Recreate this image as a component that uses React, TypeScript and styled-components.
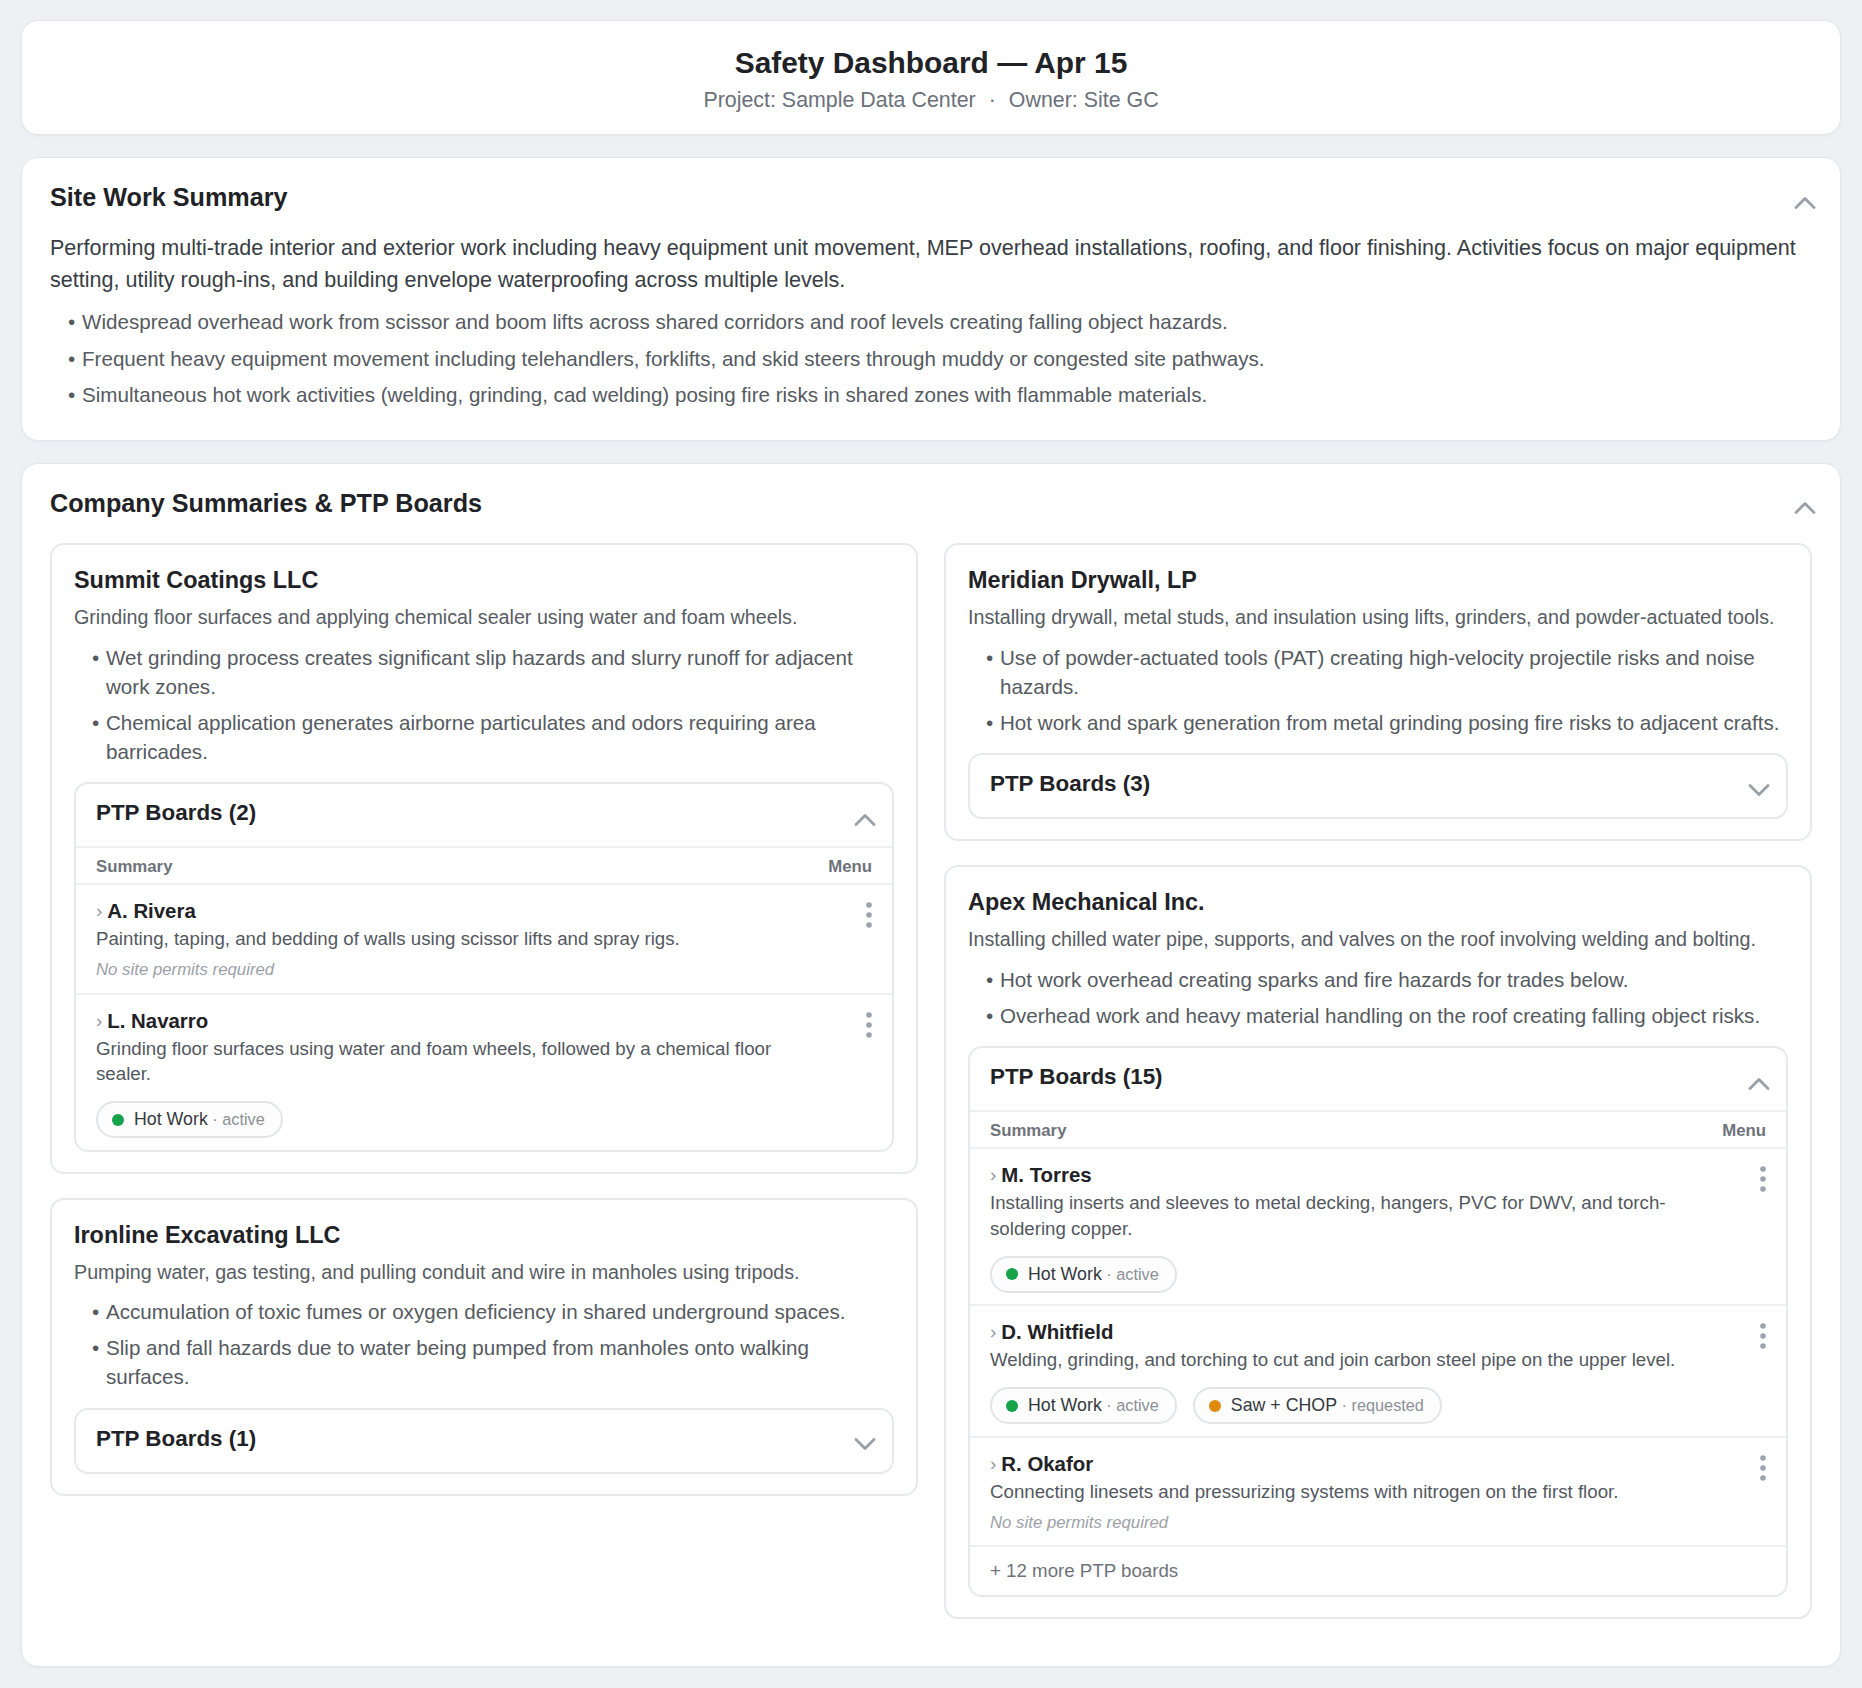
import React from 'react';
import styled, { createGlobalStyle } from 'styled-components';

const GlobalStyle = createGlobalStyle`
  * { box-sizing: border-box; }
  body {
    margin: 0;
    background: #eef0f4;
    font-family: "Liberation Sans", Arial, Helvetica, sans-serif;
    color: #1f2226;
  }
`;

const Page = styled.div`
  display: flex;
  flex-direction: column;
  gap: 22px;
  padding: 20px 21px 22px;
`;

const Card = styled.section<{ $padBottom?: number }>`
  background: #ffffff;
  border: 1px solid #e2e5ea;
  border-radius: 17px;
  box-shadow: 0 1px 3px rgba(16, 24, 40, 0.04);
  padding: 24px 28px ${(p) => p.$padBottom ?? 30}px;
`;

const HeaderCard = styled(Card)`
  text-align: center;
`;

const Title = styled.h1`
  margin: 0;
  font-size: 29.9px;
  line-height: 36px;
  font-weight: 700;
  color: #1f2226;
`;

const Subtitle = styled.div`
  margin-top: 6px;
  font-size: 21.4px;
  line-height: 26px;
  color: #6b717a;
`;

const Sep = styled.span`
  margin: 0 13px;
`;

const SectionHead = styled.div<{ $gap: number }>`
  display: flex;
  justify-content: space-between;
  align-items: flex-start;
  margin-bottom: ${(p) => p.$gap}px;
`;

const SectionTitle = styled.h2`
  margin: 0;
  font-size: 25.2px;
  line-height: 30px;
  font-weight: 700;
  color: #1f2226;
`;

const ChevronSvg = styled.svg<{ $top: number }>`
  flex: none;
  margin-top: ${(p) => p.$top}px;
  margin-right: -4px;
`;

const Lead = styled.p`
  margin: 0;
  font-size: 21.55px;
  line-height: 32px;
  color: #383d44;
`;

const BulletList = styled.ul<{ $top: number; $line: number; $gap: number }>`
  list-style: none;
  margin: ${(p) => p.$top}px 0 0;
  padding: 0 0 0 32px;
  display: flex;
  flex-direction: column;
  gap: ${(p) => p.$gap}px;
  font-size: 20.6px;
  line-height: ${(p) => p.$line}px;
  color: #555a61;

  li::before {
    content: '•';
    display: inline-block;
    width: 13px;
    margin-left: -14px;
    margin-right: 1px;
  }
`;

const CompanyGrid = styled.div`
  display: flex;
  gap: 26px;
  align-items: flex-start;
`;

const Column = styled.div`
  flex: 1 1 0;
  min-width: 0;
  display: flex;
  flex-direction: column;
  gap: 24px;
`;

const CompanyCard = styled.div`
  border: 2px solid #e7e9ed;
  border-radius: 14px;
  padding: 20px 22px 20px;
  background: #fff;
`;

const CompanyName = styled.h3`
  margin: 0;
  font-size: 23.4px;
  line-height: 30px;
  font-weight: 700;
  color: #1f2226;
`;

const CompanyDesc = styled.p`
  margin: 8px 0 0;
  font-size: 19.7px;
  line-height: 28px;
  color: #575c63;
`;

const BoardBox = styled.div`
  margin-top: 16.5px;
  border: 2px solid #e7e9ed;
  border-radius: 14px;
  overflow: hidden;
`;

const BoardHead = styled.div<{ $open: boolean }>`
  display: flex;
  justify-content: space-between;
  align-items: flex-start;
  padding: 16px 20px 20px;
  border-bottom: ${(p) => (p.$open ? '2px solid #eef0f2' : 'none')};
`;

const BoardTitle = styled.div`
  font-size: 22.4px;
  line-height: 26px;
  font-weight: 700;
  color: #1f2226;
`;

const TableHead = styled.div`
  display: grid;
  grid-template-columns: 1fr 60px;
  gap: 16px;
  padding: 9px 20px 7px;
  font-size: 16.8px;
  line-height: 19px;
  font-weight: 700;
  color: #6e737b;
  border-bottom: 2px solid #eef0f2;

  span:last-child {
    text-align: right;
  }
`;

const Row = styled.div`
  display: grid;
  grid-template-columns: 1fr 60px;
  gap: 16px;
  padding: 14px 20px 11.5px;

  & + & {
    border-top: 2px solid #eef0f2;
  }
`;

const RowName = styled.div`
  font-size: 20.4px;
  line-height: 24px;
  font-weight: 700;
  color: #1f2226;
`;

const Caret = styled.span`
  font-size: 19px;
  font-weight: 400;
  color: #9499a1;
  margin-right: 5px;
  position: relative;
  top: -1px;
`;

const RowDesc = styled.div`
  margin-top: 2px;
  font-size: 18.7px;
  line-height: 25.5px;
  color: #53585f;
`;

const NoPermits = styled.div`
  margin-top: 7.5px;
  font-size: 16.8px;
  line-height: 22px;
  font-style: italic;
  color: #9ca1a8;
`;

const Chips = styled.div`
  display: flex;
  flex-wrap: wrap;
  gap: 16px;
  margin-top: 14.5px;
`;

const Chip = styled.span`
  display: inline-flex;
  align-items: center;
  gap: 10px;
  height: 37px;
  padding: 0 16px 0 14px;
  border: 2px solid #e2e4e8;
  border-radius: 999px;
  background: #fdfdfd;
`;

const Dot = styled.span<{ $color: string }>`
  width: 12px;
  height: 12px;
  border-radius: 50%;
  background: ${(p) => p.$color};
`;

const ChipLabel = styled.span`
  font-size: 17.8px;
  color: #343a40;
`;

const ChipStatus = styled.span`
  font-size: 16.3px;
  color: #8b9097;
`;

const Kebab = styled.svg`
  justify-self: end;
  margin-top: 3px;
`;

const MoreRow = styled.div`
  padding: 13px 20px;
  border-top: 2px solid #eef0f2;
  font-size: 18.7px;
  line-height: 22px;
  color: #6e737b;
`;

function Chevron({ up, top }: { up: boolean; top: number }) {
  return (
    <ChevronSvg width="22" height="13" viewBox="0 0 22 13" $top={top}>
      <polyline
        points={up ? '2,11.5 11,2.5 20,11.5' : '2,1.5 11,10.5 20,1.5'}
        fill="none"
        stroke="#9aa0a8"
        strokeWidth="2.8"
        strokeLinecap="round"
        strokeLinejoin="round"
      />
    </ChevronSvg>
  );
}

type Permit = { label: string; status: string; color: string };
type Board = { name: string; desc: string; permits: Permit[] };
type Company = {
  name: string;
  desc: string;
  risks: string[];
  count: number;
  open: boolean;
  boards?: Board[];
  more?: number;
};

const hot: Permit = { label: 'Hot Work', status: 'active', color: '#16a34a' };
const saw: Permit = { label: 'Saw + CHOP', status: 'requested', color: '#e08a0b' };

const leftCompanies: Company[] = [
  {
    name: 'Summit Coatings LLC',
    desc: 'Grinding floor surfaces and applying chemical sealer using water and foam wheels.',
    risks: [
      'Wet grinding process creates significant slip hazards and slurry runoff for adjacent work zones.',
      'Chemical application generates airborne particulates and odors requiring area barricades.',
    ],
    count: 2,
    open: true,
    boards: [
      {
        name: 'A. Rivera',
        desc: 'Painting, taping, and bedding of walls using scissor lifts and spray rigs.',
        permits: [],
      },
      {
        name: 'L. Navarro',
        desc: 'Grinding floor surfaces using water and foam wheels, followed by a chemical floor sealer.',
        permits: [hot],
      },
    ],
  },
  {
    name: 'Ironline Excavating LLC',
    desc: 'Pumping water, gas testing, and pulling conduit and wire in manholes using tripods.',
    risks: [
      'Accumulation of toxic fumes or oxygen deficiency in shared underground spaces.',
      'Slip and fall hazards due to water being pumped from manholes onto walking surfaces.',
    ],
    count: 1,
    open: false,
  },
];

const rightCompanies: Company[] = [
  {
    name: 'Meridian Drywall, LP',
    desc: 'Installing drywall, metal studs, and insulation using lifts, grinders, and powder-actuated tools.',
    risks: [
      'Use of powder-actuated tools (PAT) creating high-velocity projectile risks and noise hazards.',
      'Hot work and spark generation from metal grinding posing fire risks to adjacent crafts.',
    ],
    count: 3,
    open: false,
  },
  {
    name: 'Apex Mechanical Inc.',
    desc: 'Installing chilled water pipe, supports, and valves on the roof involving welding and bolting.',
    risks: [
      'Hot work overhead creating sparks and fire hazards for trades below.',
      'Overhead work and heavy material handling on the roof creating falling object risks.',
    ],
    count: 15,
    open: true,
    more: 12,
    boards: [
      {
        name: 'M. Torres',
        desc: 'Installing inserts and sleeves to metal decking, hangers, PVC for DWV, and torch-soldering copper.',
        permits: [hot],
      },
      {
        name: 'D. Whitfield',
        desc: 'Welding, grinding, and torching to cut and join carbon steel pipe on the upper level.',
        permits: [hot, saw],
      },
      {
        name: 'R. Okafor',
        desc: 'Connecting linesets and pressurizing systems with nitrogen on the first floor.',
        permits: [],
      },
    ],
  },
];

function BoardRow({ board }: { board: Board }) {
  return (
    <Row>
      <div>
        <RowName>
          <Caret>›</Caret>
          {board.name}
        </RowName>
        <RowDesc>{board.desc}</RowDesc>
        {board.permits.length === 0 ? (
          <NoPermits>No site permits required</NoPermits>
        ) : (
          <Chips>
            {board.permits.map((p) => (
              <Chip key={p.label}>
                <Dot $color={p.color} />
                <span>
                  <ChipLabel>{p.label}</ChipLabel>
                  <ChipStatus> · {p.status}</ChipStatus>
                </span>
              </Chip>
            ))}
          </Chips>
        )}
      </div>
      <Kebab width="6" height="26" viewBox="0 0 6 26">
        <circle cx="3" cy="3" r="2.8" fill="#9ca3af" />
        <circle cx="3" cy="13" r="2.8" fill="#9ca3af" />
        <circle cx="3" cy="23" r="2.8" fill="#9ca3af" />
      </Kebab>
    </Row>
  );
}

function CompanyBlock({ company }: { company: Company }) {
  return (
    <CompanyCard>
      <CompanyName>{company.name}</CompanyName>
      <CompanyDesc>{company.desc}</CompanyDesc>
      <BulletList $top={11.5} $line={29} $gap={7}>
        {company.risks.map((r) => (
          <li key={r}>{r}</li>
        ))}
      </BulletList>
      <BoardBox>
        <BoardHead $open={company.open}>
          <BoardTitle>PTP Boards ({company.count})</BoardTitle>
          <Chevron up={company.open} top={12.5} />
        </BoardHead>
        {company.open && company.boards ? (
          <>
            <TableHead>
              <span>Summary</span>
              <span>Menu</span>
            </TableHead>
            {company.boards.map((b) => (
              <BoardRow key={b.name} board={b} />
            ))}
            {company.more ? <MoreRow>+ {company.more} more PTP boards</MoreRow> : null}
          </>
        ) : null}
      </BoardBox>
    </CompanyCard>
  );
}

export default function App() {
  return (
    <>
      <GlobalStyle />
      <Page>
        <HeaderCard $padBottom={21}>
          <Title>Safety Dashboard — Apr 15</Title>
          <Subtitle>
            Project: Sample Data Center<Sep>·</Sep>Owner: Site GC
          </Subtitle>
        </HeaderCard>

        <Card $padBottom={30}>
          <SectionHead $gap={20}>
            <SectionTitle>Site Work Summary</SectionTitle>
            <Chevron up top={14} />
          </SectionHead>
          <Lead>
            Performing multi-trade interior and exterior work including heavy equipment unit movement, MEP
            overhead installations, roofing, and floor finishing. Activities focus on major equipment setting,
            utility rough-ins, and building envelope waterproofing across multiple levels.
          </Lead>
          <BulletList $top={11} $line={30} $gap={6.5}>
            <li>
              Widespread overhead work from scissor and boom lifts across shared corridors and roof levels
              creating falling object hazards.
            </li>
            <li>
              Frequent heavy equipment movement including telehandlers, forklifts, and skid steers through muddy
              or congested site pathways.
            </li>
            <li>
              Simultaneous hot work activities (welding, grinding, cad welding) posing fire risks in shared
              zones with flammable materials.
            </li>
          </BulletList>
        </Card>

        <Card $padBottom={47}>
          <SectionHead $gap={25}>
            <SectionTitle>Company Summaries &amp; PTP Boards</SectionTitle>
            <Chevron up top={13} />
          </SectionHead>
          <CompanyGrid>
            <Column>
              {leftCompanies.map((c) => (
                <CompanyBlock key={c.name} company={c} />
              ))}
            </Column>
            <Column>
              {rightCompanies.map((c) => (
                <CompanyBlock key={c.name} company={c} />
              ))}
            </Column>
          </CompanyGrid>
        </Card>
      </Page>
    </>
  );
}
